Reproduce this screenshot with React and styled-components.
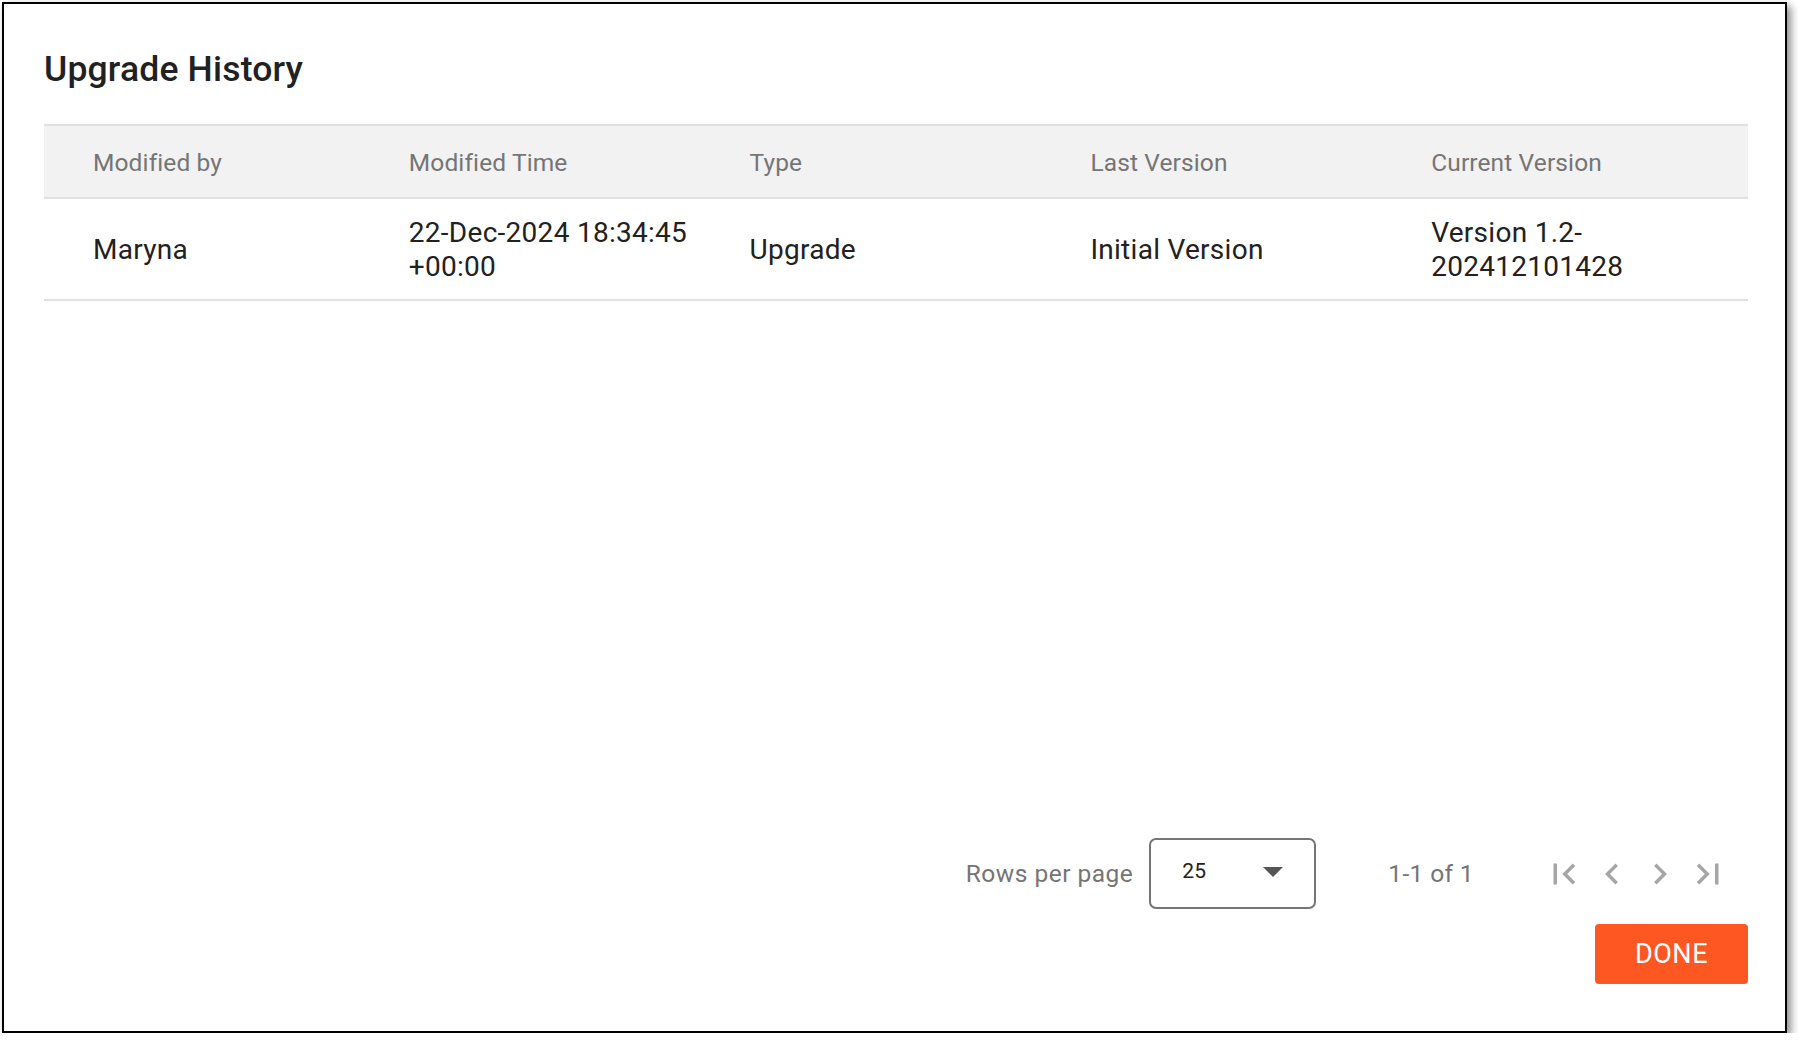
import React, { useState } from 'react';
import styled, { createGlobalStyle } from 'styled-components';

const GlobalStyle = createGlobalStyle`
    html, body {
        margin: 0;
        padding: 0;
        background: #ffffff;
    }
    body {
        font-family: Roboto, 'Liberation Sans', Arial, sans-serif;
    }
`;

const rows = [
    {
        modifiedBy: 'Maryna',
        modifiedTime: '22-Dec-2024 18:34:45 +00:00',
        type: 'Upgrade',
        lastVersion: 'Initial Version',
        currentVersion: 'Version 1.2-202412101428',
    },
];

const columns = ['Modified by', 'Modified Time', 'Type', 'Last Version', 'Current Version'];

const FirstPageIcon = () => (
    <svg viewBox="0 0 24 24" width="42" height="42" fill="currentColor">
        <path d="M18.41 16.59L13.82 12l4.59-4.59L17 6l-6 6 6 6zM6 6h2v12H6z" />
    </svg>
);

const PrevIcon = () => (
    <svg viewBox="0 0 24 24" width="42" height="42" fill="currentColor">
        <path d="M15.41 7.41L14 6l-6 6 6 6 1.41-1.41L10.83 12z" />
    </svg>
);

const NextIcon = () => (
    <svg viewBox="0 0 24 24" width="42" height="42" fill="currentColor">
        <path d="M10 6L8.59 7.41 13.17 12l-4.58 4.59L10 18l6-6z" />
    </svg>
);

const LastPageIcon = () => (
    <svg viewBox="0 0 24 24" width="42" height="42" fill="currentColor">
        <path d="M5.59 7.41L10.18 12l-4.59 4.59L7 18l6-6-6-6zM16 6h2v12h-2z" />
    </svg>
);

const UpgradeHistory = () => {
    const [rowsPerPage] = useState(25);

    return (
        <Frame>
            <Title>Upgrade History</Title>
            <Body>
                <Table>
                    <thead>
                        <tr>
                            {columns.map((c) => (
                                <HeaderCell key={c}>{c}</HeaderCell>
                            ))}
                        </tr>
                    </thead>
                    <tbody>
                        {rows.map((r, index) => (
                            <tr key={index}>
                                <Cell>{r.modifiedBy}</Cell>
                                <Cell>{r.modifiedTime}</Cell>
                                <Cell>{r.type}</Cell>
                                <Cell>{r.lastVersion}</Cell>
                                <Cell>{r.currentVersion}</Cell>
                            </tr>
                        ))}
                    </tbody>
                </Table>
            </Body>

            <Pagination>
                <PaginationLabel>Rows per page</PaginationLabel>
                <Select>
                    <span>{rowsPerPage}</span>
                    <Caret />
                </Select>
                <PageInfo>1-1 of 1</PageInfo>
                <NavGroup>
                    <NavButton disabled aria-label="first page">
                        <FirstPageIcon />
                    </NavButton>
                    <NavButton disabled aria-label="previous page">
                        <PrevIcon />
                    </NavButton>
                    <NavButton disabled aria-label="next page">
                        <NextIcon />
                    </NavButton>
                    <NavButton disabled aria-label="last page">
                        <LastPageIcon />
                    </NavButton>
                </NavGroup>
            </Pagination>

            <Actions>
                <DoneButton>DONE</DoneButton>
            </Actions>
        </Frame>
    );
};

export default function App() {
    return (
        <>
            <GlobalStyle />
            <UpgradeHistory />
        </>
    );
}

// Styled Components
const Frame = styled.div`
    box-sizing: border-box;
    margin: 2px 0 0 2px;
    width: 1785px;
    height: 1031px;
    border: 2px solid #000;
    background: #fff;
    box-shadow: 4px 4px 8px rgba(0, 0, 0, 0.45);
    padding: 44px 37px 47px 40px;
    display: flex;
    flex-direction: column;
    font-family: Roboto, 'Liberation Sans', Arial, sans-serif;
`;

const Title = styled.h2`
    margin: 0 0 34px;
    font-size: 35.5px;
    line-height: 42px;
    font-weight: 500;
    color: #212121;
    letter-spacing: 0.005em;
`;

const Body = styled.div`
    flex: 1;
`;

const Table = styled.table`
    width: 100%;
    table-layout: fixed;
    border-collapse: collapse;
`;

const HeaderCell = styled.th`
    background: #f2f2f2;
    border-top: 2px solid #e0e0e0;
    border-bottom: 2px solid #e0e0e0;
    padding: 22px 24px 20px;
    text-align: left;
    font-size: 24.5px;
    line-height: 1.2;
    font-weight: 400;
    color: #757575;
    letter-spacing: 0.005em;

    &:first-child {
        padding-left: 49px;
    }
`;

const Cell = styled.td`
    border-bottom: 2px solid #e0e0e0;
    padding: 17px 24px 15px;
    font-size: 28px;
    line-height: 33.6px;
    color: #212121;
    vertical-align: middle;
    letter-spacing: 0.01em;

    &:first-child {
        padding-left: 49px;
    }
`;

const Pagination = styled.div`
    display: flex;
    align-items: center;
    justify-content: flex-end;
    height: 71px;
    padding-right: 16px;
`;

const PaginationLabel = styled.span`
    font-size: 24.5px;
    color: #757575;
    letter-spacing: 0.02em;
    margin-right: 16px;
`;

const Select = styled.div`
    box-sizing: border-box;
    width: 167px;
    height: 71px;
    border: 2px solid #757575;
    border-radius: 7px;
    display: flex;
    align-items: center;
    justify-content: space-between;
    padding: 0 31px 6px 31px;
    font-size: 21px;
    color: #212121;
`;

const Caret = styled.span`
    width: 0;
    height: 0;
    border-left: 10px solid transparent;
    border-right: 10px solid transparent;
    border-top: 10px solid #555;
    margin-top: 2px;
`;

const PageInfo = styled.span`
    font-size: 24.5px;
    color: #757575;
    letter-spacing: 0.015em;
    margin-left: 72px;
    margin-right: 66px;
`;

const NavGroup = styled.div`
    display: flex;
    align-items: center;
`;

const NavButton = styled.button`
    width: 48px;
    height: 48px;
    padding: 3px;
    border: none;
    background: transparent;
    color: #a6a6a6;
    display: flex;
    align-items: center;
    justify-content: center;
    cursor: default;
`;

const Actions = styled.div`
    display: flex;
    justify-content: flex-end;
    margin-top: 15px;
`;

const DoneButton = styled.button`
    width: 153px;
    height: 60px;
    border: none;
    border-radius: 4px;
    background: #ff5722;
    color: #fff;
    font-family: Roboto, 'Liberation Sans', Arial, sans-serif;
    font-size: 27px;
    font-weight: 400;
    letter-spacing: 0.02em;
    cursor: pointer;
`;
